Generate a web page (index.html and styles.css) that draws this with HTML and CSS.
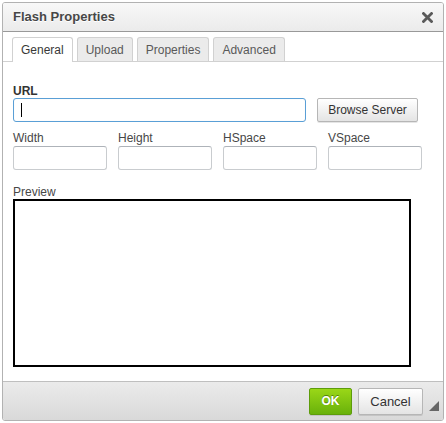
FILE: index.html
```html
<!DOCTYPE html>
<html lang="en">
  <head>
    <meta charset="UTF-8" />
    <title>Flash Properties</title>
    <link rel="stylesheet" href="styles.css">
  </head>
  <body>
    <div class="dialog">
      <div class="dialog-title">
        <span>Flash Properties</span>
        <a class="close-btn" title="Close">
          <svg width="11" height="11" viewBox="0 0 11 11">
            <path d="M1.5 1.5 L9.5 9.5 M9.5 1.5 L1.5 9.5" stroke="#5a5a5a" stroke-width="2.8" stroke-linecap="square" />
          </svg>
        </a>
      </div>

      <div class="tabs">
        <a class="tab selected">General</a>
        <a class="tab">Upload</a>
        <a class="tab">Properties</a>
        <a class="tab">Advanced</a>
      </div>

      <div class="contents">
        <label class="label bold">URL</label>
        <div class="url-row">
          <div class="input url-input focused"><span class="caret"></span></div>
          <button class="btn">Browse Server</button>
        </div>

        <div class="size-grid">
          <div class="field">
            <label class="label">Width</label>
            <div class="input"></div>
          </div>
          <div class="field">
            <label class="label">Height</label>
            <div class="input"></div>
          </div>
          <div class="field">
            <label class="label">HSpace</label>
            <div class="input"></div>
          </div>
          <div class="field">
            <label class="label">VSpace</label>
            <div class="input"></div>
          </div>
        </div>

        <label class="label preview-label">Preview</label>
        <div class="preview"></div>
      </div>

      <div class="footer">
        <button class="btn ok">OK</button>
        <button class="btn cancel">Cancel</button>
        <span class="resizer"></span>
      </div>
    </div>
  </body>
</html>
```

FILE: styles.css
```css
/* General Styles */
* {
  box-sizing: border-box;
}

body {
  margin: 0;
  padding: 0;
  background: #fff;
  font-family: "Liberation Sans", Arial, sans-serif;
  font-size: 12px;
  color: #333;
}

.dialog {
  position: relative;
  width: 442px;
  height: 419px;
  margin: 2px 0 0 2px;
  border: 1px solid #b2b2b2;
  border-radius: 3px;
  background: #fff;
  display: flex;
  flex-direction: column;
  overflow: hidden;
}

/* Title bar */
.dialog-title {
  height: 29px;
  display: flex;
  align-items: center;
  justify-content: space-between;
  padding: 0 10px 1px 10px;
  background: linear-gradient(#f8f8f8, #ebebeb);
  border-bottom: 1px solid #999;
  font-size: 13px;
  font-weight: bold;
  color: #474747;
  text-shadow: 0 1px 0 #fff;
}

.close-btn {
  display: flex;
  margin-top: 2px;
}

/* Tabs */
.tabs {
  height: 30px;
  display: flex;
  align-items: flex-end;
  gap: 4px;
  padding-left: 9px;
  border-bottom: 1px solid #d1d1d1;
  background: #fff;
}

.tab {
  height: 24px;
  padding: 0 8px;
  display: flex;
  align-items: center;
  background: #ebebeb;
  border: 1px solid #d1d1d1;
  border-bottom: none;
  border-radius: 3px 3px 0 0;
  color: #595959;
  font-size: 12px;
}

.tab.selected {
  height: 25px;
  margin-bottom: -1px;
  background: #fff;
  color: #383838;
  padding: 0 8px;
}

/* Contents */
.contents {
  flex: 1;
  padding: 22px 10px 0 10px;
  display: flex;
  flex-direction: column;
}

.label {
  display: block;
  height: 14px;
  line-height: 14px;
  color: #474747;
  font-size: 12px;
}

.label.bold {
  font-weight: bold;
  color: #333;
}

.url-row {
  display: flex;
  gap: 11px;
}

.input {
  height: 24px;
  border: 1px solid #c9cccf;
  border-top-color: #aeb3b9;
  border-radius: 3px;
  background: #fff;
}

.url-input {
  width: 293px;
  display: flex;
  align-items: center;
  padding-left: 7px;
}

.input.focused {
  border-color: #5a9fd6;
  box-shadow: inset 0 0 1px rgba(0, 0, 0, 0.1);
}

.caret {
  width: 1px;
  height: 14px;
  background: #000;
}

.btn {
  height: 24px;
  padding: 0 10px;
  border: 1px solid #b6b6b6;
  border-radius: 2px;
  background: linear-gradient(#fff, #e4e4e4);
  font-family: "Liberation Sans", Arial, sans-serif;
  font-size: 12px;
  color: #333;
  box-shadow: 0 1px 0 rgba(0, 0, 0, 0.1);
}

.url-row .btn {
  width: 101px;
}

.size-grid {
  display: grid;
  grid-template-columns: repeat(4, 94px);
  column-gap: 11px;
  margin-top: 9px;
}

.field .label {
  margin-bottom: 1px;
}

.preview-label {
  margin-top: 15px;
}

.preview {
  width: 398px;
  height: 168px;
  border: 2px solid #000;
}

/* Footer */
.footer {
  height: 39px;
  border-top: 1px solid #bfbfbf;
  background: linear-gradient(#ebebeb, #d9d9d9);
  display: flex;
  align-items: center;
  justify-content: flex-end;
  gap: 6px;
  padding-right: 20px;
}

.footer .btn {
  height: 27px;
  font-size: 12px;
  font-weight: bold;
}

.btn.ok {
  width: 43px;
  padding: 0;
  background: linear-gradient(#9ad717, #69b10b);
  border-color: #5d9c0a;
  color: #fff;
  text-shadow: 0 -1px 0 #55830c;
}

.btn.cancel {
  width: 65px;
  padding: 0;
  font-weight: normal;
  color: #333;
  font-size: 13px;
}

.resizer {
  position: absolute;
  right: 4px;
  bottom: 9px;
  width: 0;
  height: 0;
  border-left: 10px solid transparent;
  border-bottom: 10px solid #666;
}
```
